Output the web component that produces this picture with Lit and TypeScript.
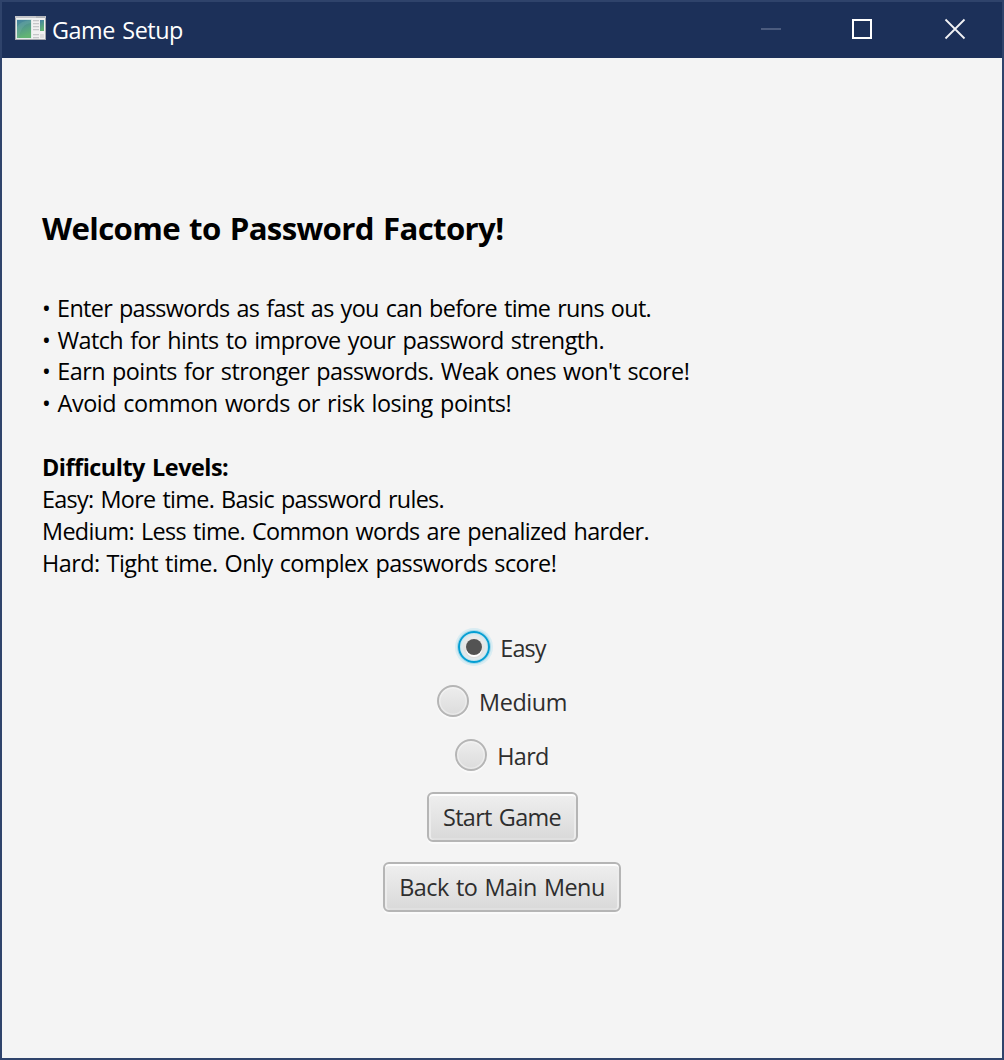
import { LitElement, html, css, svg } from "lit";
import { customElement, property, state } from "lit/decorators.js";

/** A single line of text tracked so that its advance equals `width`. */
@customElement("text-line")
class TextLine extends LitElement {
  @property() text = "";
  @property({ type: Number }) width = 0;

  static styles = css`
    :host { display: block; white-space: nowrap; }
    .run { display: inline-block; white-space: pre; }
  `;

  render() {
    return html`<span class="run">${this.text}</span>`;
  }

  updated() {
    const run = this.renderRoot.querySelector(".run") as HTMLElement;
    run.style.letterSpacing = "0";
    const natural = run.getBoundingClientRect().width;
    run.style.letterSpacing = `${(this.width - natural) / this.text.length}px`;
  }
}

@customElement("app-root")
class AppRoot extends LitElement {
  @state() private level = "Easy";

  private hints: [string, number][] = [
    ["• Enter passwords as fast as you can before time runs out.", 609],
    ["• Watch for hints to improve your password strength.", 562],
    ["• Earn points for stronger passwords. Weak ones won't score!", 647.3],
    ["• Avoid common words or risk losing points!", 469.3],
  ];
  private rules: [string, number][] = [
    ["Easy: More time. Basic password rules.", 402],
    ["Medium: Less time. Common words are penalized harder.", 607],
    ["Hard: Tight time. Only complex passwords score!", 514.3],
  ];
  private levels: [string, number][] = [["Easy", 45.5], ["Medium", 88], ["Hard", 51.5]];

  static styles = css`
    :host { display: block; }
    .window {
      box-sizing: border-box; width: 1004px; height: 1060px;
      display: flex; flex-direction: column;
      border: 2px solid #2f436b; background: #f4f4f4;
      font-family: "Open Sans", "Noto Sans", sans-serif;
      font-size: 23.4px; line-height: 31.92px; word-spacing: 1.6px; color: #000;
    }
    .bar { display: flex; height: 56px; background: #1c3059; color: #fff; flex: none; }
    .app-icon { display: block; margin: 12px 5px 0 13px; }
    .caption { margin-top: 13px; }
    .controls { display: flex; margin-left: auto; }
    .controls svg { display: block; }
    .body { display: flex; flex-direction: column; padding: 149.4px 40px 0; }
    .title { font-size: 31.2px; font-weight: 700; line-height: 42.56px; margin-bottom: 42.7px; }
    .heading { font-weight: 700; margin-top: 31.92px; }
    .form { display: flex; flex-direction: column; align-items: center; gap: 20px; margin-top: 50.1px; color: #2e2e2e; }
    .radio { display: flex; align-items: center; gap: 10px; height: 34px; cursor: pointer; }
    .radio text-line { padding-top: 3px; }
    .dot {
      box-sizing: border-box; width: 32px; height: 32px; border-radius: 50%;
      border: 2px solid #b5b5b5; display: grid; place-items: center;
      background: linear-gradient(#ededed, #dcdcdc) padding-box;
      box-shadow: inset 0 0 0 1.5px rgba(255,255,255,.35), 0 2px 0 #fafafa;
    }
    .dot.on {
      border-color: #039ed3;
      box-shadow: 0 0 0 1px #a5d9ea, 0 0 0 3px #d9ecf2, inset 0 0 0 1px #c4e4ee, inset 0 0 0 3px #dfe9ec;
    }
    .mark { width: 16px; height: 16px; border-radius: 50%; background: #535353; box-shadow: 0 2px 0 #fff; }
    .button {
      box-sizing: border-box; height: 50px; display: flex; justify-content: center; align-items: center;
      border: 2px solid #b5b5b5; border-radius: 6px; padding: 2px 0 0; margin: 0;
      background: linear-gradient(#efefef, #d9d9d9) padding-box;
      box-shadow: inset 0 2px 0 #fdfdfd, inset 2px 0 0 #ececec, inset -2px 0 0 #ececec, inset 0 -2px 0 #e0e0e0, 0 2px 0 #fafafa;
      font: inherit; color: inherit; word-spacing: inherit;
    }
    .start { width: 151px; }
    .back { width: 238px; }
  `;

  private icon() {
    return html`<svg class="app-icon" width="32" height="26" viewBox="0 0 32 26">
      <defs><linearGradient id="g" x1="0" y1="0" x2="0.3" y2="1">
        <stop offset="0" stop-color="#4380a2"/><stop offset="1" stop-color="#62b473"/>
      </linearGradient></defs>
      <rect x="0" y="2" width="31" height="25" fill="#a5a8ad"/>
      <rect x="0" y="2" width="31" height="2" fill="#c3c5c9"/>
      <path d="M21 3h9" stroke="#a2a5aa" stroke-width="1"/>
      <rect x="1" y="4" width="29" height="21" fill="#f1f1f1"/>
      <rect x="1.500" y="5" width="15" height="19.500" fill="#d4e4e2"/>
      <rect x="2" y="6" width="14" height="18" fill="url(#g)"/>
      <path d="M2 13Q5 7 16 6v3Q6 10 4 24H2Z" fill="#83bdb4" opacity=".25"/>
      ${[6, 9, 12, 15, 20, 23].map((y) => svg`<rect x="18" y=${y} width="6" height="1.300" fill="#c5c7c9"/>`)}
      <rect x="25" y="6" width="4" height="11" fill="url(#g)"/>
      <rect x="25" y="20" width="4" height="4" fill="#dedede"/>
    </svg>`;
  }

  render() {
    const line = ([text, width]: [string, number]) => html`<text-line .text=${text} .width=${width}></text-line>`;
    return html`
      <div class="window">
        <div class="bar">
          ${this.icon()}
          <div class="caption">${line(["Game Setup", 131])}</div>
          <div class="controls">
            <svg width="264" height="56" viewBox="738 2 264 56" fill="none">
              <path d="M761 29h20" stroke="#4b5b7e" stroke-width="2"/>
              <path d="M853 20h18v18h-18z" stroke="#fff" stroke-width="2"/>
              <path d="M945.500 19.500l19 19M964.500 19.500l-19 19" stroke="#f1f2f5" stroke-width="1.800"/>
            </svg>
          </div>
        </div>
        <div class="body">
          <div class="title">${line(["Welcome to Password Factory!", 461.5])}</div>
          ${this.hints.map(line)}
          <div class="heading">${line(["Difficulty Levels:", 186.3])}</div>
          ${this.rules.map(line)}
          <div class="form">
            ${this.levels.map(([name, width]) => html`
              <div class="radio" @click=${() => (this.level = name)}>
                <div class="dot ${this.level === name ? "on" : ""}">
                  ${this.level === name ? html`<div class="mark"></div>` : ""}
                </div>
                ${line([name, width])}
              </div>`)}
            <button class="button start">${line(["Start Game", 118])}</button>
            <button class="button back">${line(["Back to Main Menu", 205.5])}</button>
          </div>
        </div>
      </div>`;
  }
}
